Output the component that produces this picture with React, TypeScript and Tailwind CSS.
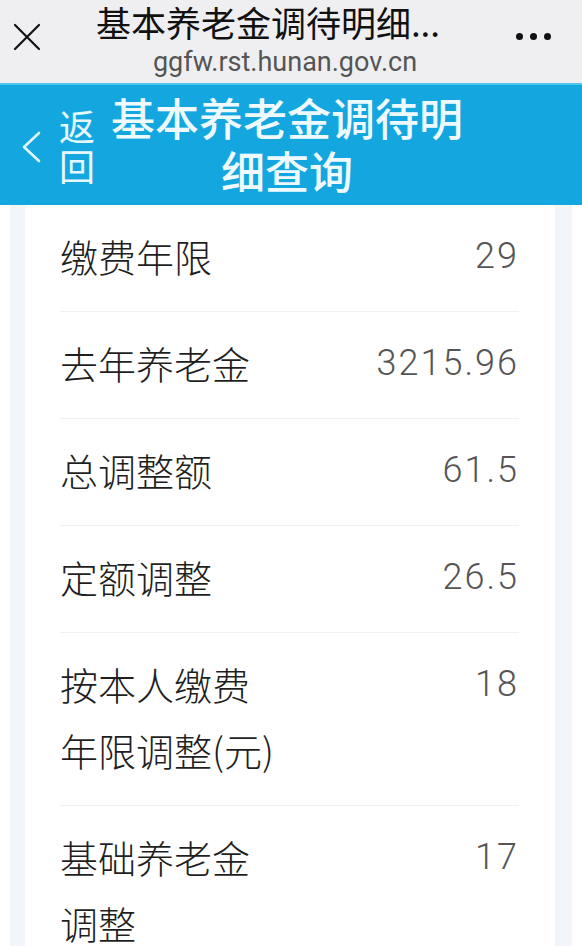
import React from 'react';

const rows = [
  { label: ['缴费年限'], value: '29' },
  { label: ['去年养老金'], value: '3215.96' },
  { label: ['总调整额'], value: '61.5' },
  { label: ['定额调整'], value: '26.5' },
  { label: ['按本人缴费', '年限调整(元)'], value: '18' },
  { label: ['基础养老金', '调整'], value: '17' },
];

const cjk = { fontFamily: '"Noto Sans CJK SC", "Noto Sans", sans-serif' };
const num = { fontFamily: 'Roboto, "Noto Sans", sans-serif' };

const App: React.FC = () => {
  return (
    <div className="w-[582px] h-[946px] overflow-hidden bg-white">
      {/* browser title bar */}
      <div className="h-[83px] bg-[#efeff1] flex items-start">
        <div className="w-[54px] pt-[23px] pl-[13px]">
          <svg width="28" height="28" viewBox="0 0 28 28" fill="none" stroke="#111" strokeWidth="2.2" strokeLinecap="round">
            <path d="M2 2 L26 26 M26 2 L2 26" />
          </svg>
        </div>
        <div className="flex-1 flex flex-col items-center pt-[2px]">
          <div className="mr-[34px] text-[35px] leading-[40px] text-[#111] whitespace-nowrap" style={cjk}>基本养老金调待明细...</div>
          <div className="mt-[4px] text-[27px] leading-[32px] text-[#555]" style={num}>ggfw.rst.hunan.gov.cn</div>
        </div>
        <div className="w-[66px] pt-[33px] flex gap-[7px]">
          <span className="w-[7px] h-[7px] rounded-full bg-[#111]" />
          <span className="w-[7px] h-[7px] rounded-full bg-[#111]" />
          <span className="w-[7px] h-[7px] rounded-full bg-[#111]" />
        </div>
      </div>

      {/* blue page header */}
      <div className="h-[122px] bg-[#14a7df] border-t-[2px] border-[#4fc6ee] flex items-center">
        <svg className="ml-[20px] shrink-0 mt-[4px]" width="22" height="34" viewBox="0 0 22 34" fill="none" stroke="#dff6ff" strokeWidth="2.6" strokeLinecap="round" strokeLinejoin="round">
          <path d="M19 3 L4 17 L19 31" />
        </svg>
        <div className="ml-[17px] w-[38px] flex flex-col text-[36px] leading-[40px] text-[#e6f8ff]" style={cjk}>
          <span>返</span>
          <span>回</span>
        </div>
        <div className="ml-[12px] w-[356px] text-center text-[44px] leading-[53px] font-medium text-[#eefaff] -mt-[2px]" style={cjk}>
          基本养老金调待明细查询
        </div>
      </div>

      {/* detail list */}
      <div className="px-[10px]">
        <div className="bg-[#f2f5f9] px-[15px] pr-[17px]">
          <div className="bg-white pl-[35px] pr-[36px]">
            {rows.map((row, i) => (
              <div key={i} className="flex justify-between items-start pt-[18px] pb-[22px] border-b border-[#eef0f3]">
                <div className="text-[38px] leading-[66px] font-light text-[#1f1f1f]" style={cjk}>
                  {row.label.map((l, j) => (
                    <div key={j}>{l}</div>
                  ))}
                </div>
                <div className="text-[36px] leading-[66px] tracking-[2px] font-light text-[#555]" style={num}>
                  {row.value}
                </div>
              </div>
            ))}
          </div>
        </div>
      </div>
    </div>
  );
};

export default App;
